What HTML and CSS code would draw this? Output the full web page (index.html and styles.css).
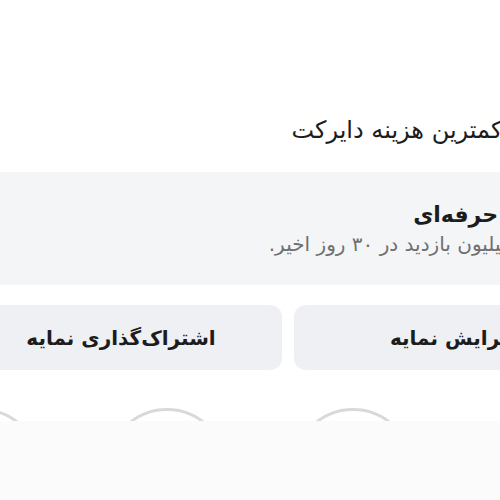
FILE: index.html
```html
<!DOCTYPE html>
<html lang="fa">
	<head>
		<meta charset="UTF-8">
		<title>نمایه</title>
		<link rel="stylesheet" href="styles.css">
	</head>
	<body>
		<div class="screen">
			<p class="bio">با کمترین هزینه دایرکت</p>
			<div class="dash">
				<div class="dashTitle">داشبورد حرفه‌ای</div>
				<div class="dashSub">۱٫۲ میلیون بازدید در ۳۰ روز اخیر.</div>
			</div>
			<div class="actions">
				<a href="#" class="btn">ویرایش نمایه</a>
				<a href="#" class="btn">اشتراک‌گذاری نمایه</a>
			</div>
			<div class="highlights">
				<span class="ring"></span>
				<span class="ring"></span>
				<span class="ring"></span>
				<span class="ring"></span>
			</div>
			<div class="sheet"></div>
		</div>
	</body>
</html>
```

FILE: styles.css
```css
*{
	margin: 0;
	padding: 0;
	box-sizing: border-box;
}
html,body{
	height: 100%;
	overflow: hidden;
	background: #fff;
}
body{
	font-family: "DejaVu Sans","Noto Sans",sans-serif;
	color: #1c1c1c;
}
.screen{
	position: relative;
	width: 720px;
	height: 500px;
	margin-left: -100px;
	direction: rtl;
}
.bio{
	padding: 113px 96px 0 0;
	font-size: 24px;
	line-height: 34px;
	white-space: nowrap;
}
.dash{
	margin-top: 25px;
	height: 113px;
	padding: 28px 27px 0 0;
	background: #f3f5f7;
	white-space: nowrap;
}
.dashTitle{
	font-size: 22px;
	font-weight: bold;
	line-height: 30px;
}
.dashSub{
	padding-right: 47px;
	font-size: 20px;
	line-height: 29px;
	color: #6f6f6f;
}
.actions{
	display: grid;
	grid-template-columns: 322px 322px;
	gap: 12px;
	margin-top: 20px;
	padding-right: 4px;
}
.btn{
	display: flex;
	align-items: center;
	justify-content: center;
	height: 65px;
	border-radius: 12px;
	background: #eff0f3;
	color: #1c1c1c;
	font-size: 20px;
	font-weight: bold;
	text-decoration: none;
	white-space: nowrap;
}
.highlights{
	display: flex;
	direction: ltr;
	gap: 66px;
	margin-top: 38px;
	padding-left: 21px;
}
.ring{
	flex: none;
	width: 120px;
	height: 120px;
	border: 3px solid #d9d9d9;
	border-radius: 50%;
}
.sheet{
	position: absolute;
	left: 0;
	right: 0;
	top: 421px;
	bottom: 0;
	background: #fbfbfc;
}
```
